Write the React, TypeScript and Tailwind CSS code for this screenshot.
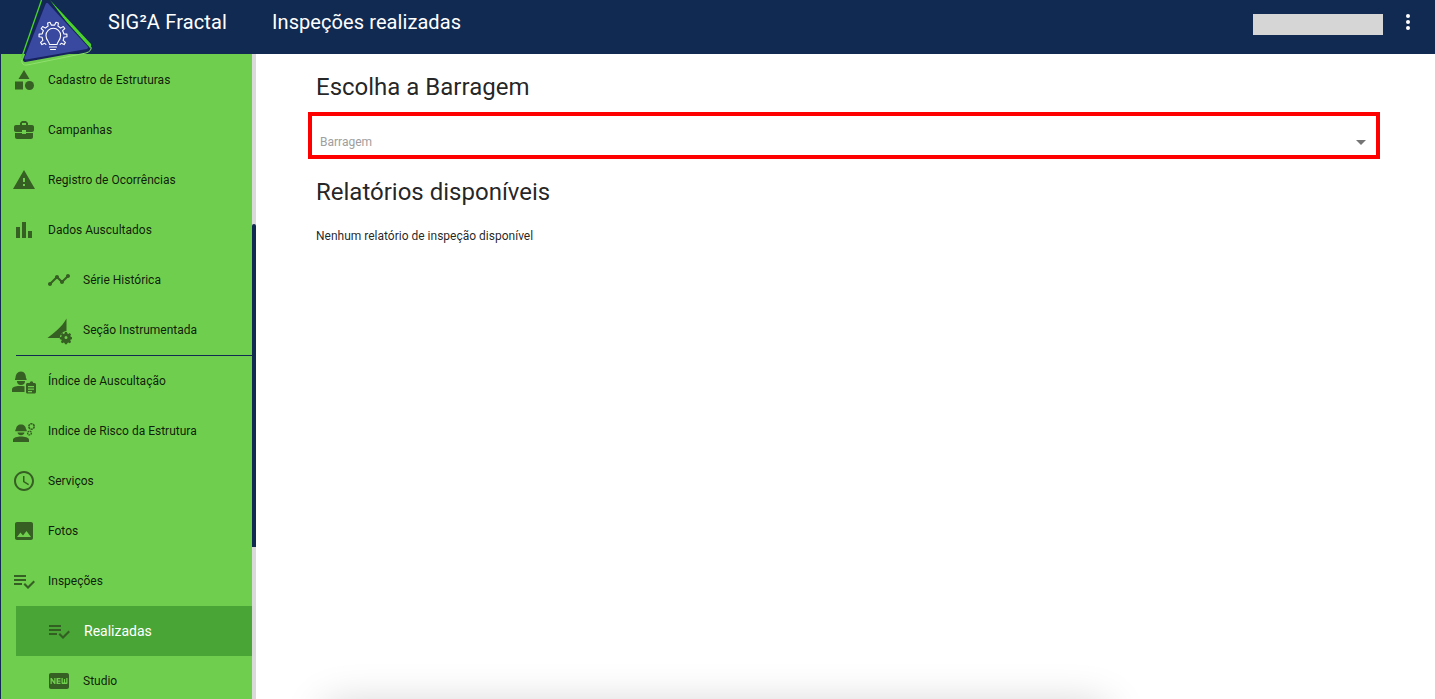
import React from "react";

const P: Record<string, React.ReactNode> = {
  category: <><path d="M12 2l-5.500 9h11z" /><circle cx="17.500" cy="17.500" r="4.500" /><path d="M3 13.500h8v8H3z" /></>,
  work: <path d="M10 16v-1H3.010L3 19c0 1.110.890 2 2 2h14c1.110 0 2-.890 2-2v-4h-7v1h-4zm10-9h-4.010V5l-2-2h-4l-2 2v2H4c-1.100 0-2 .900-2 2v3c0 1.110.890 2 2 2h6v-2h4v2h6c1.100 0 2-.900 2-2V9c0-1.100-.900-2-2-2zm-6 0h-4V5h4v2z" />,
  warning: <path d="M1 21h22L12 2 1 21zm12-3h-2v-2h2v2zm0-4h-2v-4h2v4z" />,
  bars: <path d="M4 9h4v11H4zm12 4h4v7h-4zm-6-9h4v16h-4z" />,
  timeline: <path d="M23 8c0 1.100-.900 2-2 2-.180 0-.350-.020-.510-.070l-3.560 3.550c.050.160.070.340.070.520 0 1.100-.900 2-2 2s-2-.900-2-2c0-.180.020-.360.070-.520l-2.550-2.550c-.160.050-.340.070-.520.070s-.360-.020-.520-.070l-4.550 4.560c.050.160.070.330.070.510 0 1.100-.900 2-2 2s-2-.900-2-2 .900-2 2-2c.180 0 .350.020.510.070l4.560-4.550C8.020 9.360 8 9.180 8 9c0-1.100.900-2 2-2s2 .900 2 2c0 .180-.020.360-.070.520l2.550 2.550c.160-.050.340-.070.520-.070s.360.020.520.070l3.550-3.560C19.020 8.350 19 8.180 19 8c0-1.100.900-2 2-2s2 .900 2 2z" />,
  section: <><path d="M0.500 20 C7 15 15 9 19.500 0.500 V13 C15.500 13.500 13 16.500 12.800 20 Z" /><path fillRule="evenodd" d="M18 14.500h2l.4 1.500 1 .4 1.300-.8 1.400 1.400-.8 1.300.4 1 1.300.4v2l-1.300.4-.4 1 .8 1.300-1.400 1.400-1.300-.8-1 .4-.4 1.300h-2l-.4-1.300-1-.4-1.300.8-1.400-1.400.8-1.300-.4-1-1.500-.4v-2l1.500-.4.4-1-.8-1.300 1.400-1.400 1.300.8 1-.4zM19 18.500a1.500 1.500 0 100 3 1.500 1.500 0 000-3z" transform="translate(0 -.5)" /></>,
  schedule: <path d="M11.990 2C6.470 2 2 6.480 2 12s4.470 10 9.990 10C17.520 22 22 17.520 22 12S17.520 2 11.990 2zM12 20c-4.420 0-8-3.580-8-8s3.580-8 8-8 8 3.580 8 8-3.580 8-8 8zm.500-13H11v6l5.250 3.150.750-1.230-4.500-2.670z" />,
  image: <path d="M21 19V5c0-1.100-.900-2-2-2H5c-1.100 0-2 .900-2 2v14c0 1.100.900 2 2 2h14c1.100 0 2-.900 2-2zM8.500 13.500l2.500 3.010L14.500 12l4.500 6H5l3.500-4.500z" />,
  check: <path d="M14 10H2v2h12v-2zm0-4H2v2h12V6zM2 16h8v-2H2v2zm19.500-4.500L23 13l-6.990 7-4.510-4.500L13 14l3.010 3 5.490-5.500z" />,
  fresh: <path d="M20 4H4c-1.110 0-1.990.890-1.990 2L2 18c0 1.110.890 2 2 2h16c1.110 0 2-.890 2-2V6c0-1.110-.890-2-2-2zM8.500 15H7.300l-2.550-3.500V15H3.500V9h1.250l2.500 3.500V9H8.500v6zm5-4.740H11v1.120h2.500v1.260H11v1.110h2.500V15h-4V9h4v1.260zm7 3.740c0 .550-.450 1-1 1h-4c-.550 0-1-.450-1-1V9h1.250v4.510h1.130V9.990h1.250v3.510h1.120V9h1.250v5z" />,
  clipboardWorker: <>
    <path d="M3.500 9.500C3.500 5.500 5.500 2.500 9 2.500s5 3 5 7h.6v1.500H3V9.500z" />
    <path d="M5 12h8a4 4 0 01-8 0z" />
    <path d="M7 17c-3 0-7 .8-7 3.500V23h12.500v-5.700C11 17.100 9 17 7 17z" />
    <path fillRule="evenodd" d="M15.500 14h2.200a1.800 1.800 0 013.600 0h1.200c.8 0 1.500.7 1.500 1.500v7.500c0 .8-.7 1.500-1.500 1.500h-7c-.8 0-1.500-.7-1.500-1.500v-7.500c0-.8.700-1.500 1.500-1.500zM16 17v1.200h6V17zM16 19.500v1.200h6v-1.200zM16 22v1.200h4V22z" />
  </>,
  gearWorker: <>
    <path d="M4 10.500C4 7.500 6 5.500 9 5.500s5 2 5 5h.7v1.800H3.300v-1.800z" />
    <path d="M5.500 13.500h7a3.600 3.600 0 01-7 0z" />
    <path d="M9 17.500c-3.500 0-8 1-8 3.300V23h16v-2.200c0-2.300-4.500-3.300-8-3.300z" />
    <circle cx="19.500" cy="7.500" r="2.700" fill="none" stroke="currentColor" strokeWidth="1.600" strokeDasharray="2.200 .6" />
    <circle cx="17.500" cy="14" r="1.900" fill="none" stroke="currentColor" strokeWidth="1.400" strokeDasharray="1.600 .5" />
  </>,
};

function Icon({ name, size = 24 }: { name: string; size?: number }) {
  return (
    <svg width={size} height={size} viewBox="0 0 24 24" fill="currentColor" className="overflow-visible">
      {P[name]}
    </svg>
  );
}

function Row({ icon, label, sub }: { icon: string; label: string; sub?: boolean }) {
  return (
    <div className={`flex h-[50px] items-center ${sub ? "pl-[45px]" : "pl-[10px]"}`}>
      <span className="flex h-[25px] w-[25px] shrink-0 items-center justify-center text-[#365f23]">
        <Icon name={icon} />
      </span>
      <span className="ml-[12px] text-[12px] text-[rgba(0,0,0,0.87)]">{label}</span>
    </div>
  );
}

function gearPath(cx: number, cy: number) {
  const out = 14;
  const inn = 11;
  const teeth = 8;
  const start = 130;
  const span = 280;
  const pts: string[] = [];
  const step = span / teeth;
  for (let i = 0; i < teeth; i++) {
    const a = start + step * i;
    const seq: [number, number][] = [
      [inn, a],
      [inn, a + step * 0.25],
      [out, a + step * 0.35],
      [out, a + step * 0.65],
      [inn, a + step * 0.75],
    ];
    for (const [r, d] of seq) {
      const t = (d * Math.PI) / 180;
      pts.push(`${(cx + r * Math.cos(t)).toFixed(1)} ${(cy + r * Math.sin(t)).toFixed(1)}`);
    }
  }
  const t = ((start + span) * Math.PI) / 180;
  pts.push(`${(cx + inn * Math.cos(t)).toFixed(1)} ${(cy + inn * Math.sin(t)).toFixed(1)}`);
  return "M" + pts.join(" L");
}

function Logo() {
  return (
    <svg width="100" height="68" viewBox="0 0 100 68" className="absolute left-0 top-0 z-20">
      <path d="M21.500 60 Q22 66 27 65 L86 53 Q92 51 91 47" fill="none" stroke="#8fe06f" strokeWidth="1" />
      <path d="M41.500 0 L21.500 58" fill="none" stroke="#4bd32b" strokeWidth="1.300" />
      <path d="M50 0 L91 44 Q92 49 87 50 Z" fill="#4bd32b" />
      <path d="M47 3 L88 48.500 L25 60 Z" fill="#17235f" stroke="#17235f" strokeWidth="4" strokeLinejoin="round" />
      <path d="M47 4.500 L86.500 47.500 L26 58 Z" fill="#3949a0" stroke="#3949a0" strokeWidth="3" strokeLinejoin="round" />
      <g fill="none" stroke="#fff" strokeWidth="1.100" strokeLinejoin="round" strokeLinecap="round">
        <path d={gearPath(53, 36)} />
        <path d="M49.500 44.500 c0-3-3.500-4-3.500-9 a7.300 7.300 0 1114.600 0 c0 5-3.500 6-3.500 9 z" />
        <path d="M49.500 47h7M50.500 49.500h5" />
      </g>
    </svg>
  );
}

export default function App() {
  return (
    <div className="relative flex h-[699px] w-[1435px] flex-col overflow-hidden bg-white font-['Roboto',sans-serif]">
      <Logo />
      <header className="flex h-[54px] shrink-0 items-start bg-[#112a52] text-white">
        <div className="ml-[108px] mt-[8px] w-[164px] text-[20px] leading-[28px] tracking-[0.15px]">SIG²A Fractal</div>
        <div className="mt-[8px] text-[20px] leading-[28px] tracking-[0.08px]">Inspeções realizadas</div>
        <div className="ml-auto mr-[23px] mt-[14px] h-[21px] w-[130px] bg-[#d6d6d6]" />
        <div className="mr-[25px] mt-[14px] flex flex-col gap-[2px]">
          <span className="h-1 w-1 rounded-full bg-white" />
          <span className="h-1 w-1 rounded-full bg-white" />
          <span className="h-1 w-1 rounded-full bg-white" />
        </div>
      </header>
      <div className="flex min-h-0 flex-1">
        <aside className="relative flex w-[256px] shrink-0 overflow-hidden">
          <div className="w-[252px] shrink-0 border-l border-[#112a52] bg-[#6fce4d] pt-px">
            <Row icon="category" label="Cadastro de Estruturas" />
            <Row icon="work" label="Campanhas" />
            <Row icon="warning" label="Registro de Ocorrências" />
            <Row icon="bars" label="Dados Auscultados" />
            <Row icon="timeline" label="Série Histórica" sub />
            <Row icon="section" label="Seção Instrumentada" sub />
            <div className="ml-[15px] h-px bg-[#112a52]" />
            <Row icon="clipboardWorker" label="Índice de Auscultação" />
            <Row icon="gearWorker" label="Indice de Risco da Estrutura" />
            <Row icon="schedule" label="Serviços" />
            <Row icon="image" label="Fotos" />
            <Row icon="check" label="Inspeções" />
            <div className="ml-[15px] flex h-[50px] items-center bg-[#4aa537] pl-[30px]">
              <span className="flex h-[25px] w-[25px] shrink-0 items-center justify-center text-[#335f23]">
                <Icon name="check" />
              </span>
              <span className="ml-[13px] pt-px text-[14px] text-white">Realizadas</span>
            </div>
            <Row icon="fresh" label="Studio" sub />
          </div>
          <div className="w-[4px] shrink-0 bg-[#dadada] pt-[170px]">
            <div className="h-[323px] w-full rounded-t-[2px] bg-[#112a52]" />
          </div>
        </aside>
        <main className="flex min-w-0 flex-1 flex-col pl-[60px]">
          <h1 className="mt-[17px] shrink-0 text-[24px] leading-[32px] text-[rgba(0,0,0,0.87)]">Escolha a Barragem</h1>
          <div className="-ml-[8px] mt-[9px] flex h-[47px] w-[1072px] shrink-0 items-end border-4 border-[#ff0000] pb-[1px] pl-[8px] pr-[10px]">
            <span className="text-[12px] leading-[24px] text-[#9e9e9e]">Barragem</span>
            <span className="mb-[9px] ml-auto h-0 w-0 border-x-[5px] border-t-[5px] border-x-transparent border-t-[#757575]" />
          </div>
          <h2 className="mt-[17px] shrink-0 text-[24px] leading-[32px] text-[rgba(0,0,0,0.87)]">Relatórios disponíveis</h2>
          <p className="mt-[20px] shrink-0 text-[12px] leading-[16px] text-[rgba(0,0,0,0.87)]">Nenhum relatório de inspeção disponível</p>
          <div className="ml-[10px] mt-[462px] h-[40px] w-[780px] shrink-0 bg-white shadow-[0_0_44px_rgba(0,0,0,0.2)]" />
        </main>
      </div>
    </div>
  );
}
